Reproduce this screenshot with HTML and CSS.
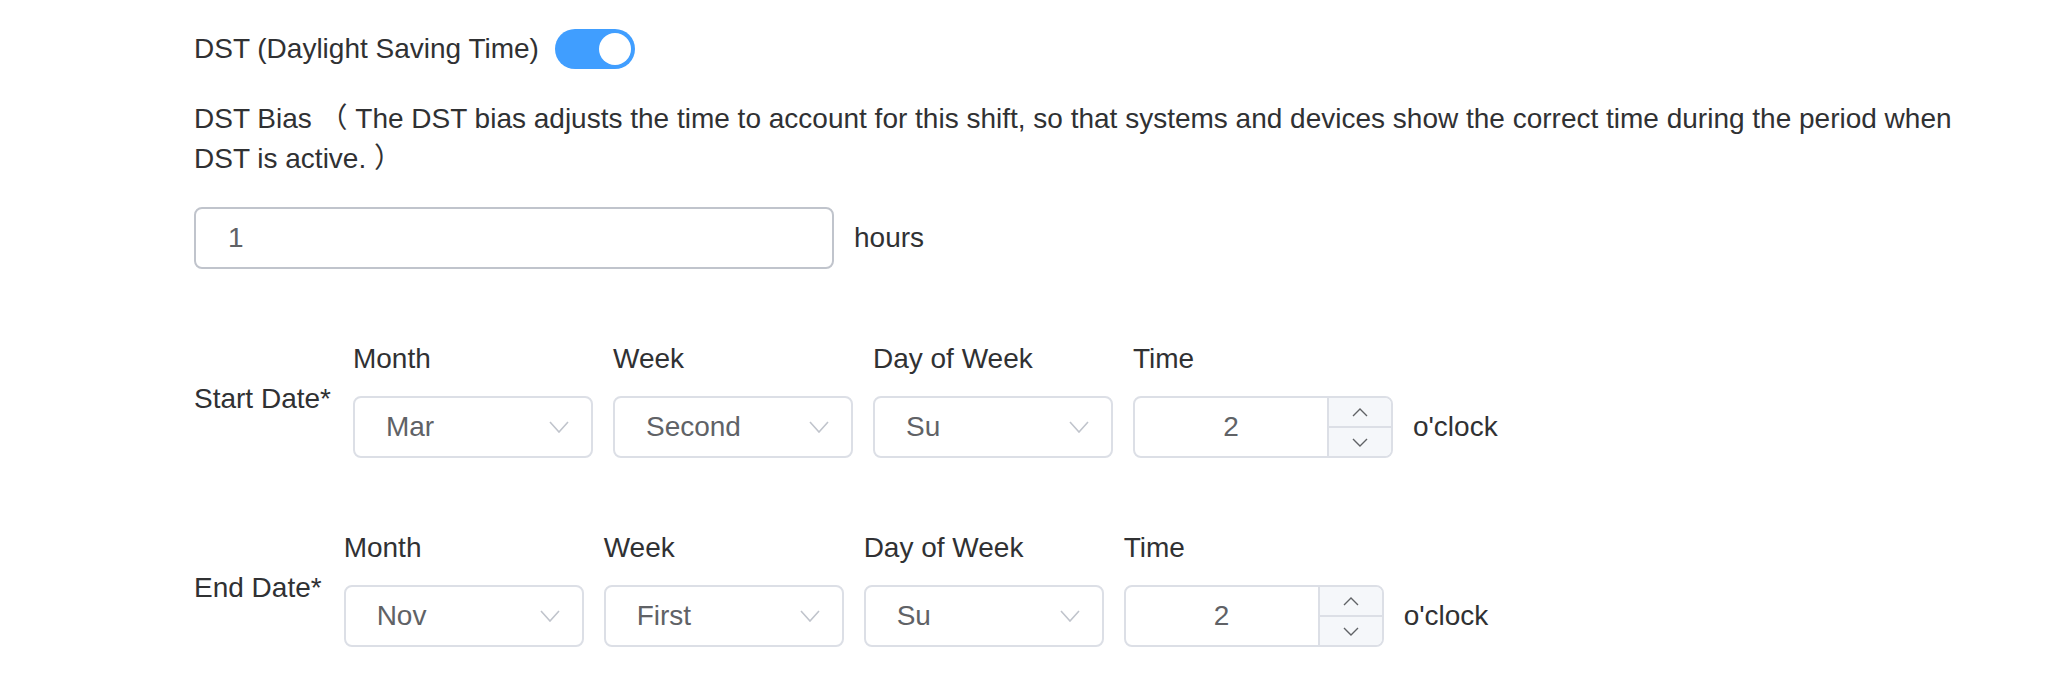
FILE: index.html
```html
<!DOCTYPE html>
<html lang="en">
<head>
    <meta charset="UTF-8">
    <meta name="viewport" content="width=device-width, initial-scale=1.0">
    <title>DST Settings</title>
    <link rel="stylesheet" href="styles.css">
</head>
<body>
    <div class="form">
        <div class="switch-row">
            <span>DST (Daylight Saving Time)</span>
            <span class="switch is-on"></span>
        </div>

        <p class="bias">DST Bias （ The DST bias adjusts the time to account for this shift, so that systems and devices show the correct time during the period when DST is active. ）</p>

        <div class="bias-field">
            <div class="text-input">1</div>
            <span>hours</span>
        </div>

        <!-- start date -->
        <div class="date-row">
            <span class="date-label">Start Date*</span>
            <div class="field">
                <div class="field-label">Month</div>
                <div class="select">
                    <span>Mar</span>
                    <svg class="chevron" width="20" height="12" viewBox="0 0 20 12"><polyline points="1,1 10,11 19,1"/></svg>
                </div>
            </div>
            <div class="field">
                <div class="field-label">Week</div>
                <div class="select">
                    <span>Second</span>
                    <svg class="chevron" width="20" height="12" viewBox="0 0 20 12"><polyline points="1,1 10,11 19,1"/></svg>
                </div>
            </div>
            <div class="field">
                <div class="field-label">Day of Week</div>
                <div class="select">
                    <span>Su</span>
                    <svg class="chevron" width="20" height="12" viewBox="0 0 20 12"><polyline points="1,1 10,11 19,1"/></svg>
                </div>
            </div>
            <div class="field">
                <div class="field-label">Time</div>
                <div class="number-input">
                    <span class="num">2</span>
                    <div class="steps">
                        <span class="step"><svg width="16" height="9" viewBox="0 0 16 9"><polyline points="1,8 8,1 15,8"/></svg></span>
                        <span class="step step-down"><svg width="16" height="9" viewBox="0 0 16 9"><polyline points="1,1 8,8 15,1"/></svg></span>
                    </div>
                </div>
            </div>
            <span class="unit">o'clock</span>
        </div>

        <!-- end date -->
        <div class="date-row">
            <span class="date-label">End Date*</span>
            <div class="field">
                <div class="field-label">Month</div>
                <div class="select">
                    <span>Nov</span>
                    <svg class="chevron" width="20" height="12" viewBox="0 0 20 12"><polyline points="1,1 10,11 19,1"/></svg>
                </div>
            </div>
            <div class="field">
                <div class="field-label">Week</div>
                <div class="select">
                    <span>First</span>
                    <svg class="chevron" width="20" height="12" viewBox="0 0 20 12"><polyline points="1,1 10,11 19,1"/></svg>
                </div>
            </div>
            <div class="field">
                <div class="field-label">Day of Week</div>
                <div class="select">
                    <span>Su</span>
                    <svg class="chevron" width="20" height="12" viewBox="0 0 20 12"><polyline points="1,1 10,11 19,1"/></svg>
                </div>
            </div>
            <div class="field">
                <div class="field-label">Time</div>
                <div class="number-input">
                    <span class="num">2</span>
                    <div class="steps">
                        <span class="step"><svg width="16" height="9" viewBox="0 0 16 9"><polyline points="1,8 8,1 15,8"/></svg></span>
                        <span class="step step-down"><svg width="16" height="9" viewBox="0 0 16 9"><polyline points="1,1 8,8 15,1"/></svg></span>
                    </div>
                </div>
            </div>
            <span class="unit">o'clock</span>
        </div>
    </div>
</body>
</html>
```

FILE: styles.css
```css
body {
    margin: 0;
    background: #fff;
    font-family: "Liberation Sans", "Noto Sans CJK SC", Arial, sans-serif;
    font-size: 28px;
    color: #303133;
}
.form {
    padding: 29px 30px 0 194px;
}
.switch-row {
    display: flex;
    align-items: center;
    gap: 16px;
    height: 40px;
}
.switch {
    position: relative;
    width: 80px;
    height: 40px;
    border-radius: 20px;
    background: #dcdfe6;
}
.switch.is-on {
    background: #409eff;
}
.switch::after {
    content: "";
    position: absolute;
    top: 4px;
    left: 4px;
    width: 32px;
    height: 32px;
    border-radius: 50%;
    background: #fff;
}
.switch.is-on::after {
    left: auto;
    right: 4px;
}
.bias {
    margin: 30px 0 0;
    line-height: 40px;
    max-width: 1810px;
}
.bias-field {
    display: flex;
    align-items: center;
    gap: 20px;
    margin-top: 28px;
}
.text-input {
    box-sizing: border-box;
    width: 640px;
    height: 62px;
    padding: 0 32px;
    border: 2px solid #c0c4cc;
    border-radius: 8px;
    display: flex;
    align-items: center;
    color: #606266;
}
.date-row {
    display: flex;
    align-items: flex-start;
    margin-top: 70px;
}
.date-label {
    margin-top: 40px;
    margin-right: 22px;
    line-height: 40px;
}
.field {
    display: flex;
    flex-direction: column;
    margin-right: 20px;
}
.field-label {
    line-height: 40px;
    margin-bottom: 17px;
}
.select {
    box-sizing: border-box;
    width: 240px;
    height: 62px;
    padding: 0 22px 0 31px;
    border: 2px solid #dcdfe6;
    border-radius: 8px;
    display: flex;
    align-items: center;
    justify-content: space-between;
    color: #606266;
}
.chevron polyline {
    fill: none;
    stroke: #c0c4cc;
    stroke-width: 1.6;
}
.number-input {
    box-sizing: border-box;
    width: 260px;
    height: 62px;
    border: 2px solid #dcdfe6;
    border-radius: 8px;
    display: flex;
    overflow: hidden;
    color: #606266;
}
.num {
    flex: 1;
    display: flex;
    align-items: center;
    justify-content: center;
}
.steps {
    width: 62px;
    border-left: 2px solid #dcdfe6;
    background: #f5f7fa;
    display: flex;
    flex-direction: column;
}
.step {
    flex: 1;
    display: flex;
    align-items: center;
    justify-content: center;
}
.step-down {
    border-top: 2px solid #dcdfe6;
}
.step polyline {
    fill: none;
    stroke: #606266;
    stroke-width: 1.4;
}
.unit {
    align-self: flex-end;
    line-height: 62px;
}
```
